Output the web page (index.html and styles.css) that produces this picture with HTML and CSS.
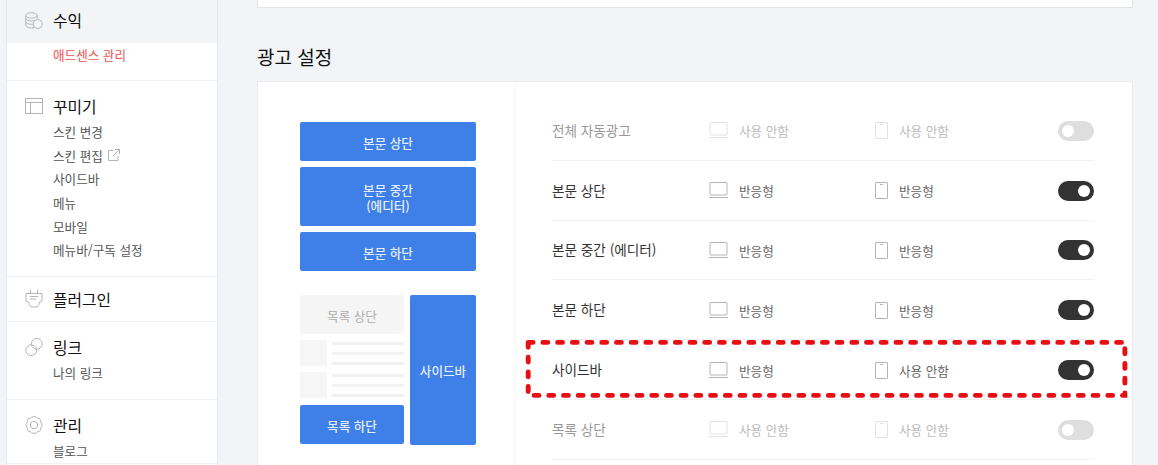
FILE: index.html
```html
<!DOCTYPE html>
<html lang="ko">

<head>
  <meta charset="utf-8">
  <title>광고 설정</title>
  <link rel="stylesheet" href="styles.css">
</head>

<body>
  <svg class="symbols">
    <symbol id="pc" viewBox="0 0 19 17">
      <rect x="1" y="0.5" width="17" height="12.5" rx="0.5" />
      <path d="M0 15.5h19" />
    </symbol>
    <symbol id="phone" viewBox="0 0 13 17">
      <rect x="0.5" y="0.5" width="12" height="16" rx="0.5" />
      <path d="M5 2.5h3" />
    </symbol>
  </svg>

  <div class="page">
    <aside class="sidebar">
      <section class="menu menu_profit">
        <h2 class="menu_title active">
          <svg class="menu_icon" viewBox="0 0 18 18">
            <ellipse cx="6.5" cy="3.4" rx="5.7" ry="2.7" />
            <path d="M.8 3.4v3c0 1.5 2.5 2.6 5.7 2.6 1.3 0 2.400-.2 3.400-.5M12.200 3.400v3.200M.8 6.400v3.300c0 1.500 2.500 2.600 5.700 2.600h1.500M.8 9.700v3.500c0 1.600 2.500 2.800 5.700 2.800 1 0 2-.1 2.800-.4" />
            <circle cx="12.800" cy="12" r="4.500" />
          </svg>
          수익
        </h2>
        <ul class="menu_list">
          <li class="current">애드센스 관리</li>
        </ul>
      </section>
      <section class="menu menu_design">
        <h2 class="menu_title">
          <svg class="menu_icon" viewBox="0 0 18 18">
            <rect x="0.500" y="1.500" width="17" height="15" />
            <path d="M.5 5.500h17M5.500 5.500v11" />
          </svg>
          꾸미기
        </h2>
        <ul class="menu_list">
          <li>스킨 변경</li>
          <li>스킨 편집
            <svg class="link_icon" viewBox="0 0 12 12">
              <path d="M5 1.500H.5v10h9.500V7M7 .5h4.500V5M11.500.5L5 7" />
            </svg>
          </li>
          <li>사이드바</li>
          <li>메뉴</li>
          <li>모바일</li>
          <li>메뉴바/구독 설정</li>
        </ul>
      </section>
      <section class="menu menu_plugin">
        <h2 class="menu_title">
          <svg class="menu_icon" viewBox="0 0 18 18">
            <path d="M1 3.500h16v7.500l-3 1.500v2l-2 2.500H6l-2-2.500v-2L1 11zM5.500 0v3.500M12.500 0v3.500M5 6.500h8M5 9h6" />
          </svg>
          플러그인
        </h2>
      </section>
      <section class="menu menu_link">
        <h2 class="menu_title">
          <svg class="menu_icon" viewBox="0 0 18 18">
            <path d="M7.200 8.600a5.400 5.400 0 1 1 4.200 2.600" />
            <path d="M10.800 9.400a5.400 5.400 0 1 1-4.200-2.600" />
            <path d="M6.600 6.800a5.400 5.400 0 0 1 4.200 2.600M7.200 8.600a5.400 5.400 0 0 0 4.200 2.600" />
          </svg>
          링크
        </h2>
        <ul class="menu_list">
          <li>나의 링크</li>
        </ul>
      </section>
      <section class="menu menu_manage">
        <h2 class="menu_title">
          <svg class="menu_icon" viewBox="0 0 18 18">
            <path d="M6.500 1.300Q9-.3 11.500 1.300L12.700 2.300 14.700 2.600 15.700 4.500 15.800 6.200Q18.600 9 15.800 11.800L15.700 13.500 14.700 15.400 12.700 15.700 11.500 16.700Q9 18.300 6.500 16.700L5.300 15.700 3.300 15.400 2.300 13.500 2.200 11.800Q-.6 9 2.200 6.200L2.300 4.500 3.300 2.600 5.300 2.300z" />
            <circle cx="9" cy="9" r="3.700" />
          </svg>
          관리
        </h2>
        <ul class="menu_list">
          <li>블로그</li>
        </ul>
      </section>
    </aside>

    <main class="content">
      <div class="prev_box"></div>
      <h1 class="title">광고 설정</h1>
      <div class="box">
        <div class="preview">
          <div class="ad">본문 상단</div>
          <div class="ad tall">본문 중간<br>(에디터)</div>
          <div class="ad">본문 하단</div>
          <div class="preview_list">
            <div class="list_col">
              <div class="ad off">목록 상단</div>
              <div class="post">
                <div class="thumb"></div>
                <div class="lines"><i></i><i></i><i></i></div>
              </div>
              <div class="post">
                <div class="thumb"></div>
                <div class="lines"><i></i><i></i><i></i></div>
              </div>
              <div class="ad bottom">목록 하단</div>
            </div>
            <div class="ad side">사이드바</div>
          </div>
        </div>

        <div class="settings">
          <div class="row disabled">
            <span class="name">전체 자동광고</span>
            <span class="pc"><svg class="icon_pc"><use href="#pc" /></svg>사용 안함</span>
            <span class="mobile"><svg class="icon_phone"><use href="#phone" /></svg>사용 안함</span>
            <span class="toggle"></span>
          </div>
          <div class="row">
            <span class="name">본문 상단</span>
            <span class="pc"><svg class="icon_pc"><use href="#pc" /></svg>반응형</span>
            <span class="mobile"><svg class="icon_phone"><use href="#phone" /></svg>반응형</span>
            <span class="toggle on"></span>
          </div>
          <div class="row">
            <span class="name">본문 중간 (에디터)</span>
            <span class="pc"><svg class="icon_pc"><use href="#pc" /></svg>반응형</span>
            <span class="mobile"><svg class="icon_phone"><use href="#phone" /></svg>반응형</span>
            <span class="toggle on"></span>
          </div>
          <div class="row">
            <span class="name">본문 하단</span>
            <span class="pc"><svg class="icon_pc"><use href="#pc" /></svg>반응형</span>
            <span class="mobile"><svg class="icon_phone"><use href="#phone" /></svg>반응형</span>
            <span class="toggle on"></span>
          </div>
          <div class="row">
            <span class="name">사이드바</span>
            <span class="pc"><svg class="icon_pc"><use href="#pc" /></svg>반응형</span>
            <span class="mobile"><svg class="icon_phone"><use href="#phone" /></svg>사용 안함</span>
            <span class="toggle on"></span>
            <svg class="marker" viewBox="0 0 604 60">
              <path d="M3.200 3.400H599.900V56.400H3.200z" />
            </svg>
          </div>
          <div class="row disabled">
            <span class="name">목록 상단</span>
            <span class="pc"><svg class="icon_pc"><use href="#pc" /></svg>사용 안함</span>
            <span class="mobile"><svg class="icon_phone"><use href="#phone" /></svg>사용 안함</span>
            <span class="toggle"></span>
          </div>
        </div>
      </div>
    </main>
  </div>
</body>

</html>
```
FILE: styles.css
```css
* {
  box-sizing: border-box;
}
body {
  margin: 0;
  background-color: #f2f4f7;
  color: #333;
  font-family: "Noto Sans CJK KR", sans-serif;
  font-size: 12.6px;
}
h1, h2, ul {
  margin: 0;
  padding: 0;
  font-weight: 400;
  list-style: none;
}
svg {
  fill: none;
  stroke: #b5b5b5;
  flex-shrink: 0;
}
.symbols {
  display: none;
}
.page {
  display: flex;
  height: 465px;
  padding-left: 6px;
  overflow: hidden;
}

/* sidebar */
.sidebar {
  width: 212px;
  height: 500px;
  background-color: #fff;
  border: 1px solid #e6e9ec;
  border-width: 0 1px;
}
.menu {
  border-bottom: 1px solid #f1f2f4;
}
.menu_profit {
  height: 81px;
}
.menu_design {
  height: 196px;
  padding-top: 13px;
}
.menu_plugin {
  height: 45px;
  padding-top: 10px;
}
.menu_link {
  height: 78px;
  padding-top: 13px;
}
.menu_manage {
  padding-top: 13px;
}
.menu_title {
  display: flex;
  align-items: center;
  height: 24px;
  padding-left: 18px;
  color: #111;
  font-size: 15.8px;
}
.menu_title.active {
  height: 43px;
  padding-bottom: 2px;
  background-color: #f2f4f6;
}
.menu_icon {
  width: 18px;
  height: 18px;
  margin-right: 10px;
}
.menu_list {
  padding: 2px 0 0 46px;
  color: #555;
}
.menu_list li {
  display: flex;
  align-items: center;
  height: 23.6px;
}
.menu_profit .menu_list {
  padding-top: 0;
}
.menu_list .current {
  color: #ef5350;
}
.link_icon {
  width: 12px;
  height: 12px;
  margin-left: 5px;
}

/* content */
.content {
  width: 876px;
  margin-left: 39px;
}
.prev_box {
  height: 8px;
  background-color: #fff;
  border: 1px solid #e2e5e8;
  border-top: 0;
}
.title {
  height: 73px;
  padding-top: 35px;
  color: #111;
  font-size: 19px;
  line-height: 28px;
}
.box {
  display: flex;
  height: 420px;
  background-color: #fff;
  border: 1px solid #e9ebee;
}
.preview {
  width: 258px;
  padding: 40px 39px 0 42px;
  border-right: 1px solid #f5f6f7;
}
.ad {
  display: flex;
  align-items: center;
  justify-content: center;
  height: 39px;
  margin-bottom: 6px;
  padding-top: 2px;
  border-radius: 2px;
  background-color: #3e7fe8;
  color: #e4eefc;
  font-weight: 500;
  line-height: 16px;
  text-align: center;
}
.ad.tall {
  height: 59px;
}
.preview_list {
  display: flex;
  gap: 6px;
  margin-top: 24px;
}
.list_col {
  width: 104px;
}
.ad.off {
  background-color: #f5f5f5;
  color: #b0b0b0;
  font-weight: 400;
}
.post {
  display: flex;
  height: 26px;
  margin-bottom: 6px;
}
.thumb {
  width: 27px;
  margin-right: 5px;
  border-radius: 0 3px 0 0;
  background-color: #f6f6f6;
}
.lines {
  display: flex;
  flex: 1;
  flex-direction: column;
  justify-content: space-between;
  padding: 2px 0 1px;
}
.lines i {
  height: 3px;
  background-color: #f2f2f2;
}
.ad.bottom {
  margin: 7px 0 0;
}
.ad.side {
  flex: 1;
  height: 150px;
  margin: 0;
}

/* settings rows */
.settings {
  padding: 19px 0 0 36px;
}
.row {
  position: relative;
  display: flex;
  align-items: center;
  width: 542px;
  height: 59.800px;
  padding-top: 1px;
  border-bottom: 1px solid #f0f0f0;
  color: #666;
}
.name {
  width: 157px;
  padding-bottom: 2px;
  color: #333;
  font-size: 13.600px;
}
.pc,
.mobile {
  display: flex;
  align-items: center;
  width: 166px;
}
.mobile {
  width: 183px;
}
.icon_pc {
  width: 19px;
  height: 17px;
  margin-right: 11px;
}
.icon_phone {
  width: 13px;
  height: 17px;
  margin-right: 11px;
}
.toggle {
  width: 36px;
  height: 20px;
  padding: 4px;
  border-radius: 10px;
  background-color: #dedede;
}
.toggle::before {
  content: "";
  display: block;
  width: 12px;
  height: 12px;
  border-radius: 50%;
  background-color: #fff;
}
.toggle.on {
  background-color: #333;
}
.toggle.on::before {
  margin-left: auto;
}
.disabled {
  color: #bbb;
}
.disabled .name {
  color: #999;
}
.disabled svg {
  stroke: #e2e2e2;
}

/* red dashed frame over the sidebar row */
.marker {
  position: absolute;
  top: -1px;
  left: -27px;
  width: 604px;
  height: 60px;
}
.marker path {
  stroke: #e60f14;
  stroke-width: 4.900;
  stroke-linecap: round;
  stroke-dasharray: 4.900 9.810;
}
```
